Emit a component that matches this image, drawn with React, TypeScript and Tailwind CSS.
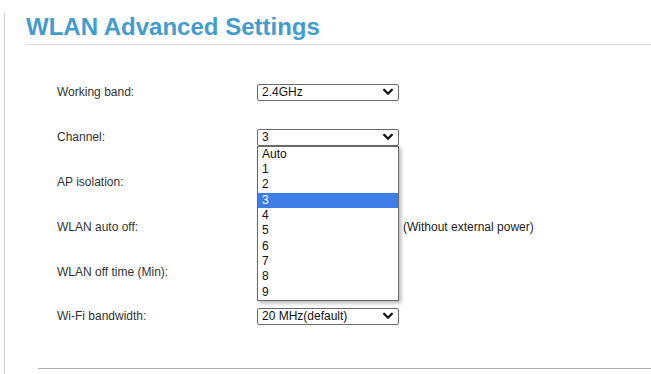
import React from "react";

const Chevron = () => (
  <svg width="10" height="7" viewBox="0 0 10 7" className="absolute right-[5px] top-1/2 -translate-y-1/2">
    <path d="M1.2 1.4 L5 5.2 L8.8 1.4" fill="none" stroke="#111" strokeWidth="2.2" strokeLinecap="square" />
  </svg>
);

const Select = ({ value }: { value: string }) => (
  <div className="relative h-[17px] w-[142px] shrink-0 rounded-[2px] border border-[#6b6b6b] bg-white pl-[4px] text-[12px] leading-[15px] text-[#111]">
    {value}
    <Chevron />
  </div>
);

const options = ["Auto", "1", "2", "3", "4", "5", "6", "7", "8", "9"];

export default function App() {
  const font = { fontFamily: '"Liberation Sans", Arial, sans-serif' };
  return (
    <div className="h-[374px] w-[651px] overflow-hidden bg-white" style={font}>
      <div className="ml-[4px] h-full border-l border-[#d4d4d4]">
        <div className="ml-[21px] mt-[13px] border-b border-[#dcdcdc] pb-[3px] text-[24px] font-bold leading-[28px] text-[#439cce]">
          WLAN Advanced Settings
        </div>
        <div className="ml-[52px] mt-[25px] text-[12px] text-[#333]">
          <div className="flex h-[44.8px] items-center">
            <div className="w-[200px]">Working band:</div>
            <Select value="2.4GHz" />
          </div>
          <div className="flex h-[44.8px] items-center">
            <div className="w-[200px]">Channel:</div>
            <div className="relative">
              <Select value="3" />
              <div className="absolute left-0 top-[17px] z-10 w-[142px] border border-[#6b6b6b] bg-white shadow-[2px_2px_4px_rgba(0,0,0,0.3)]">
                {options.map((o) => (
                  <div
                    key={o}
                    className={
                      o === "3"
                        ? "h-[15.33px] bg-[#3d7fe6] pl-[4px] text-[12px] leading-[15.33px] text-white"
                        : "h-[15.33px] pl-[4px] text-[12px] leading-[15.33px] text-[#111]"
                    }
                  >
                    {o}
                  </div>
                ))}
              </div>
            </div>
          </div>
          <div className="flex h-[44.8px] items-center">
            <div className="w-[200px]">AP isolation:</div>
            <Select value="" />
          </div>
          <div className="flex h-[44.8px] items-center">
            <div className="w-[200px]">WLAN auto off:</div>
            <Select value="" />
            <div className="ml-[4px] text-[#222]">(Without external power)</div>
          </div>
          <div className="flex h-[44.8px] items-center">
            <div className="w-[200px]">WLAN off time (Min):</div>
            <Select value="" />
          </div>
          <div className="flex h-[44.8px] items-center">
            <div className="w-[200px]">Wi-Fi bandwidth:</div>
            <Select value="20 MHz(default)" />
          </div>
        </div>
        <div className="ml-[33px] mt-[29px] border-t border-[#b0b0b0]" />
      </div>
    </div>
  );
}
